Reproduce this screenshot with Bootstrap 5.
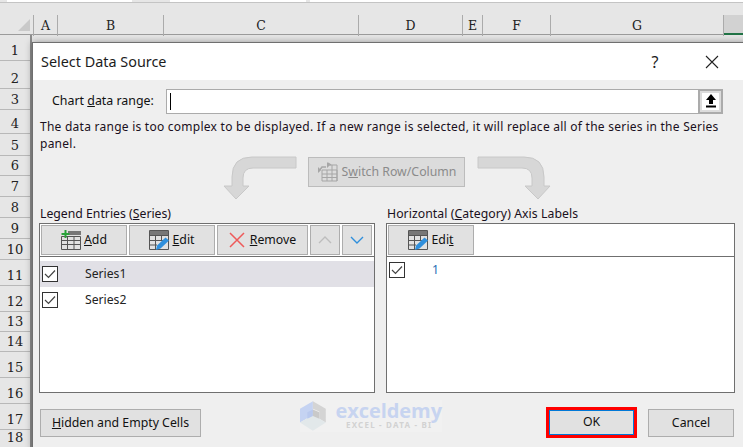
<!DOCTYPE html>
<html lang="en">
<head>
<meta charset="utf-8">
<title>Select Data Source</title>
<link href="https://cdn.jsdelivr.net/npm/bootstrap@5.3.0/dist/css/bootstrap.min.css" rel="stylesheet">
<style>
html,body{width:743px;height:447px;overflow:hidden;background:#e6e6e6;margin:0}
body{font-family:"Noto Sans","Open Sans",sans-serif;font-size:12px;color:#111;position:relative}
.tab-strip{height:3px;border-bottom:1px solid #c4c4c4;display:flex}
.tab-box{background:#fff;height:2px}
.tb1{margin-left:7px;width:125px}.tb2{margin-left:38px;width:136px}.tb3{margin-left:4px;width:433px}
.top-strip{height:12px}
.col-heads{height:20px;display:grid;grid-template-columns:34px 24px 106px 195px 104px 20px 68px 173px 20px;border-bottom:1px solid #9b9b9b;font-family:"DejaVu Serif","Liberation Serif",serif;font-size:12.5px;color:#222;text-align:center;line-height:21px}
.col-heads>div{border-right:1px solid #ababab}
.col-heads>div:first-child{position:relative}
.col-heads>div:last-child{border-right:0;background:#d2d2d2;border-bottom:2px solid #217346;height:20px}
.corner{position:absolute;right:3px;top:4px;width:12px;height:12px;background:#c9c9c9;clip-path:polygon(100% 0,100% 100%,0 100%)}
.row-heads{width:32px;display:grid;grid-template-rows:26px 28px 21px 24px 22px 20px 21px 21px 21px 21px 26px 26px 20px 20px 26px 26px 26px 18px;border-right:2px solid #8d8d8d;font-family:"DejaVu Serif","Liberation Serif",serif;font-size:13px;line-height:17px;color:#222;text-align:center;height:412px}
.row-heads>div{border-bottom:1px solid #b8b8b8;display:flex;align-items:flex-end;justify-content:center;padding-bottom:1px}
.dlg{position:absolute;left:32px;top:42px;width:720px;height:410px;background:#efefef;border:1px solid #6f6f6f;box-shadow:0 0 7px rgba(0,0,0,.35)}
.dlg-head{height:37px;background:#fff;padding-left:8px;padding-right:32px;font-size:14.4px;color:#1c1c1c}
.dlg-q{width:26px;text-align:center;font-size:16px;margin-right:37px}
.range-row{height:24px;margin-top:9px;padding-left:19px}
.range-lab{width:114px;font-size:12.4px}
.range-box{width:557px;height:25px;background:#fff;border:1px solid #ababab;display:flex;justify-content:space-between}
.caret{width:1px;height:17px;background:#000;margin:3px 0 0 3px}
.pick{width:25px;height:25px;margin:-1px -1px 0 0;border:2px solid #ababab;background:#fff;box-shadow:inset 0 0 0 2px #dcdcdc;display:flex;align-items:center;justify-content:center}
.info{padding:5px 0 0 7px;font-size:12px;letter-spacing:.25px;line-height:17px;color:#1a1020;white-space:nowrap}
.switch-row{height:32px;margin-top:3px;position:relative}
.arr{position:absolute;top:0}
.a1{left:189px}.a2{left:443px}
.xbtn.btn{border-radius:0;border:1px solid #adadad;background:#e1e1e1;color:#111;font-size:12.3px;line-height:1;padding:0;display:flex;align-items:center;justify-content:center}
.sw.xbtn.btn{position:absolute;left:275px;top:2px;width:157px;height:30px;gap:3px;color:#8b8b8b;opacity:1;background:#dcdcdc;border-color:#bcbcbc}
.panels{margin-top:18px;padding-left:6px;gap:11px}
.pn{width:336px}.pn2{width:349px}
.pn-lab{height:18px;font-size:12.25px;line-height:18px;color:#1a1020;white-space:nowrap;margin-left:1px}
.pn2 .pn-lab{letter-spacing:.06px}
.pn-box{height:170px;background:#fff;border:1px solid #6f6f6f}
.pn-tools{height:33px;border-bottom:1px solid #6f6f6f;padding:1px;gap:2px}
.pn-tools .btn{height:30px}
.w86{width:86px;gap:3px}.w91{width:91px;gap:5px}.w30{width:30px}
.itm{height:26px;padding-left:2px;font-size:12.2px;color:#222}
.itm.sel{background:#e1e0e6}
.cb{width:16px;height:16px;border:1px solid #333;background:#fff;display:flex;align-items:center;justify-content:center;flex:none}
.itm-t{margin-left:27px}
.pad3{height:4px}
.bot{position:relative;height:48px}
.hid.btn{position:absolute;left:7px;top:16px;width:161px;height:28px}
.ok.btn{position:absolute;left:516px;top:17px;width:85px;height:25px;border:1px solid #0078d7;outline:3px solid #f00;outline-offset:0}
.cn.btn{position:absolute;left:615px;top:16px;width:86px;height:28px}
.wm{position:absolute;left:267px;top:7px;width:142px;height:32px;background:#f1f1f1;color:#c7d4f0;display:flex}
.wm-txt{margin-left:5px;line-height:1;text-align:center;white-space:nowrap;width:109px}
.wm-a{font-size:20px;font-weight:700;letter-spacing:-.05px;display:block;font-family:"Open Sans",sans-serif;line-height:21px}
.wm-b{font-size:8px;color:#d2d2d2;letter-spacing:1.2px;display:block;font-weight:700;line-height:8px;padding-left:1px}
.itm-blue{color:#1f6fb5}
</style>
</head>
<body>
<div class="tab-strip"><div class="tab-box tb1"></div><div class="tab-box tb2"></div><div class="tab-box tb3"></div></div>
<div class="top-strip"></div>
<div class="col-heads"><div><span class="corner"></span></div><div>A</div><div>B</div><div>C</div><div>D</div><div>E</div><div>F</div><div>G</div><div></div></div>
<div class="row-heads">
<div>1</div><div>2</div><div>3</div><div>4</div><div>5</div><div>6</div><div>7</div><div>8</div><div>9</div><div>10</div><div>11</div><div>12</div><div>13</div><div>14</div><div>15</div><div>16</div><div>17</div><div>18</div>
</div>

<div class="dlg">
  <div class="dlg-head d-flex align-items-center justify-content-between">
    <span>Select Data Source</span>
    <span class="d-flex align-items-center"><span class="dlg-q">?</span>
    <svg width="14" height="14" viewBox="0 0 14 14"><path d="M1 1 13 13M13 1 1 13" stroke="#222" stroke-width="1.1" fill="none"/></svg></span>
  </div>
  <div class="range-row d-flex align-items-center">
    <span class="range-lab">Chart <u>d</u>ata range:</span>
    <div class="range-box"><div class="caret"></div>
      <div class="pick"><svg width="12" height="14" viewBox="0 0 12 14"><path d="M6 0 11 6H8V10H4V6H1Z" fill="#000"/><rect x="1" y="11.5" width="10" height="2" fill="#000"/></svg></div>
    </div>
  </div>
  <div class="info">The data range is too complex to be displayed. If a new range is selected, it will replace all of the series in the Series<br>panel.</div>
  <div class="switch-row">
    <svg class="arr a1" width="76" height="46" viewBox="0 0 76 46"><path d="M74 2V13H31Q21 13 21 23V31H27L14 44 2 31H10V22Q10 2 30 2Z" fill="#d7d7d7" stroke="#c8c8c8"/></svg>
    <button class="btn xbtn sw" disabled>
      <svg width="22" height="20" viewBox="0 0 22 20"><g fill="none" stroke="#a6a6a6"><path d="M5 8H20V19H5ZM10 3H20V19M5 12H20M5 15.500H20M10 8V19M15 3V19"/><path d="M2 9 5 5H9M14 3 11 1" stroke-width="1.500"/></g><path d="M10 0 13 3 10 6ZM1 11 4 8 1 5Z" fill="#a6a6a6"/></svg>
      <span>S<u>w</u>itch Row/Column</span>
    </button>
    <svg class="arr a2" width="76" height="46" viewBox="0 0 76 46"><path d="M2 2V13H46Q56 13 56 23V31H49L62 44 74 31H68V22Q68 2 48 2Z" fill="#d7d7d7" stroke="#c8c8c8"/></svg>
  </div>
  <div class="panels d-flex">
    <div class="pn">
      <div class="pn-lab">Legend Entries (<u>S</u>eries)</div>
      <div class="pn-box">
        <div class="pn-tools d-flex">
          <button class="btn xbtn w86"><svg width="20" height="20" viewBox="0 0 20 20"><g fill="none" stroke="#555"><path d="M.5 6.500H19.500V19.500H.5ZM.5 10.500H19.500M.5 14.500H19.500M6.500 6.500V19.500M13 6.500V19.500"/></g><rect x="7" y="1" width="13" height="4" fill="#777"/><path d="M4.500 0V8M.5 4H8.500" stroke="#2aa33a" stroke-width="2"/></svg><span><u>A</u>dd</span></button>
          <button class="btn xbtn w86"><svg width="20" height="20" viewBox="0 0 20 20"><g fill="none" stroke="#555"><path d="M.5.5H19.500V19.500H.5ZM.5 5.500H19.500V9M.5 10.500H14M.5 15H8M6.500 5.500V19.500M12.500 5.500V11"/></g><rect x="1" y="1" width="18" height="4" fill="#777"/><path d="M7 20 8 15.500 16.500 7.500 20 10.500 11.500 18.500Z" fill="#2f8fdc"/></svg><span><u>E</u>dit</span></button>
          <button class="btn xbtn w91"><svg width="16" height="16" viewBox="0 0 16 16"><path d="M1 1 15 15M15 1 1 15" stroke="#ee5a5a" stroke-width="1.500"/></svg><span><u>R</u>emove</span></button>
          <button class="btn xbtn w30"><svg width="14" height="8" viewBox="0 0 14 8"><path d="M1 7 7 1 13 7" fill="none" stroke="#bdbdbd" stroke-width="1.400"/></svg></button>
          <button class="btn xbtn w30"><svg width="14" height="8" viewBox="0 0 14 8"><path d="M1 1 7 7 13 1" fill="none" stroke="#2f8fdc" stroke-width="1.400"/></svg></button>
        </div>
        <div class="pad3"></div>
        <div class="itm sel d-flex align-items-center"><span class="cb"><svg width="12" height="10" viewBox="0 0 12 10"><path d="M1 5 4.500 8.500 11 1.500" fill="none" stroke="#444" stroke-width="1.200"/></svg></span><span class="itm-t">Series1</span></div>
        <div class="itm d-flex align-items-center"><span class="cb"><svg width="12" height="10" viewBox="0 0 12 10"><path d="M1 5 4.500 8.500 11 1.500" fill="none" stroke="#444" stroke-width="1.200"/></svg></span><span class="itm-t">Series2</span></div>
      </div>
    </div>
    <div class="pn pn2">
      <div class="pn-lab">Horizontal (<u>C</u>ategory) Axis Labels</div>
      <div class="pn-box">
        <div class="pn-tools d-flex">
          <button class="btn xbtn w86"><svg width="20" height="20" viewBox="0 0 20 20"><g fill="none" stroke="#555"><path d="M.5.5H19.500V19.500H.5ZM.5 5.500H19.500V9M.5 10.500H14M.5 15H8M6.500 5.500V19.500M12.500 5.500V11"/></g><rect x="1" y="1" width="18" height="4" fill="#777"/><path d="M7 20 8 15.500 16.500 7.500 20 10.500 11.500 18.500Z" fill="#2f8fdc"/></svg><span>Edi<u>t</u></span></button>
        </div>
        <div class="itm d-flex align-items-center"><span class="cb"><svg width="12" height="10" viewBox="0 0 12 10"><path d="M1 5 4.500 8.500 11 1.500" fill="none" stroke="#444" stroke-width="1.200"/></svg></span><span class="itm-t itm-blue">1</span></div>
      </div>
    </div>
  </div>
  <div class="bot">
    <div class="wm">
      <svg width="33" height="32" viewBox="0 0 33 32"><path d="M14 0 0 8V23L14 15V8Z" fill="#c5d3f2"/><path d="M14 0 28 8V23L21 19V11L14 8Z" fill="#d4d4d4"/><path d="M0 23 14 15 28 23 14 32Z" fill="#e2e8ea"/><path d="M8 12 14 9V16L8 19Z" fill="#b9c9ee"/><path d="M14 9 21 12V19L14 16Z" fill="#c9c9c9"/></svg>
      <div class="wm-txt"><span class="wm-a">exceldemy</span><span class="wm-b">EXCEL - DATA - BI</span></div>
    </div>
    <button class="btn xbtn hid"><span><u>H</u>idden and Empty Cells</span></button>
    <button class="btn xbtn ok">OK</button>
    <button class="btn xbtn cn">Cancel</button>
  </div>
</div>
<script src="https://cdn.jsdelivr.net/npm/bootstrap@5.3.0/dist/js/bootstrap.bundle.min.js"></script>
</body>
</html>
